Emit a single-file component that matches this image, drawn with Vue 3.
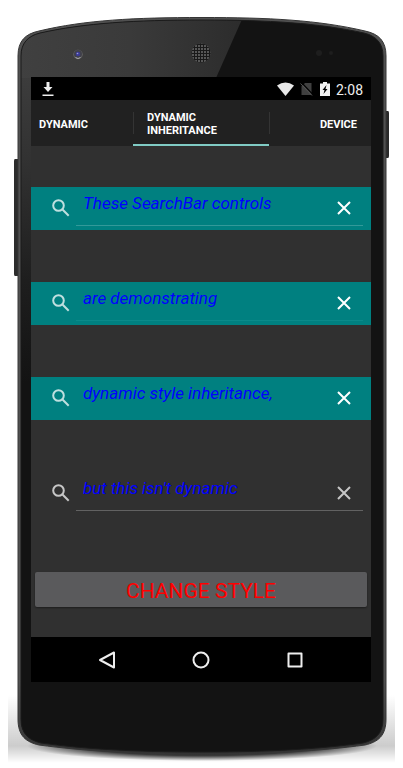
<script setup>
import { ref } from 'vue'

const tabs = ['Dynamic', 'Dynamic Inheritance', 'Device']
const active = ref(1)
const teal = ref(true)
const bars = ref([
  { text: 'These SearchBar controls', dynamic: true, line: 'bright' },
  { text: 'are demonstrating', dynamic: true, line: 'faint' },
  { text: 'dynamic style inheritance,', dynamic: true, line: 'none' },
  { text: "but this isn't dynamic", dynamic: false, line: 'bright' },
])
</script>

<template>
  <div class="phone">
    <svg class="body" viewBox="0 0 403 768" preserveAspectRatio="none" aria-hidden="true">
      <defs>
        <linearGradient id="face" x1="0" y1="0" x2="0" y2="1">
          <stop offset="0" stop-color="#3c3c3c" />
          <stop offset=".12" stop-color="#323232" />
          <stop offset=".3" stop-color="#1e1e1e" />
          <stop offset=".45" stop-color="#131313" />
          <stop offset="1" stop-color="#131313" />
        </linearGradient>
        <linearGradient id="gloss" x1="0" y1="0" x2="1" y2="0">
          <stop offset="0" stop-color="#404040" />
          <stop offset=".5" stop-color="#3a3a3a" />
          <stop offset="1" stop-color="#2c2c2c" />
        </linearGradient>
        <linearGradient id="rim" x1="0" y1="0" x2="0" y2="1">
          <stop offset="0" stop-color="#505050" />
          <stop offset=".9" stop-color="#505050" />
          <stop offset=".97" stop-color="#3c3c3c" />
          <stop offset="1" stop-color="#303030" />
        </linearGradient>
        <linearGradient id="fade" x1="0" y1="0" x2="0" y2="1">
          <stop offset="0" stop-color="#000" stop-opacity="0" />
          <stop offset=".75" stop-color="#000" stop-opacity=".2" />
          <stop offset="1" stop-color="#000" stop-opacity="0" />
        </linearGradient>
        <radialGradient id="under">
          <stop offset="0" stop-color="#000" />
          <stop offset=".65" stop-color="#000" stop-opacity=".75" />
          <stop offset="1" stop-color="#000" stop-opacity="0" />
        </radialGradient>
        <pattern id="mesh" width="3" height="3" patternUnits="userSpaceOnUse">
          <rect width="3" height="3" fill="#191919" />
          <circle cx="1" cy="1" r="1" fill="#6c6c6c" />
        </pattern>
        <clipPath id="shell">
          <path d="M21 56C21 43 28 36 40 33C85 23 135 20 202 20S318 23 364 33C376 36 383 43 383 56V719C383 734 375 740 363 743C320 749 270 752 202 752S84 749 41 743C29 740 21 734 21 719Z" />
        </clipPath>
      </defs>
      <rect x="8" y="695" width="387" height="68" fill="url(#fade)" />
      <ellipse cx="202" cy="746" rx="175" ry="15" fill="url(#under)" />
      <path d="M18 159H15Q14 159 14 161V274Q14 276 15 276H18Z" fill="#2c2c2c" />
      <path d="M385 111H388Q389 111 389 113V156Q389 158 388 158H385Z" fill="#292929" />
      <path d="M18 56C18 41 25 34 39 31C85 20 135 17.500 202 17.500S318 20 365 31C379 34 386 41 386 56V719C386 736 378 742 365 745C320 751 270 754 202 754S84 751 39 745C26 742 18 736 18 719Z" fill="url(#rim)" stroke="#363636" />
      <g clip-path="url(#shell)">
        <rect x="17" y="17" width="370" height="740" fill="#131313" />
        <rect x="17" y="77" width="15" height="680" fill="url(#face)" />
        <path d="M17 17H243L216 78H17Z" fill="url(#gloss)" />
      </g>
      <path d="M21 56C21 43 28 36 40 33C85 23 135 20 202 20S318 23 364 33C376 36 383 43 383 56V719C383 734 375 740 363 743C320 749 270 752 202 752S84 749 41 743C29 740 21 734 21 719Z" fill="none" stroke="#1b1b1b" />
      <circle cx="78" cy="54.500" r="4.700" fill="#666" />
      <circle cx="78" cy="54" r="4" fill="#40404a" />
      <circle cx="78" cy="54" r="2.200" fill="#3b3b99" />
      <circle cx="77.500" cy="53.500" r=".8" fill="#9a9ad0" />
      <path d="M75.500 57.500Q78 59.500 80.500 57.500" fill="none" stroke="#aaa" />
      <circle cx="201" cy="53" r="9.500" fill="url(#mesh)" />
      <circle cx="319" cy="53" r="3" fill="#1e1e1e" />
      <circle cx="331" cy="53" r="2" fill="#1e1e1e" />
    </svg>

    <div class="screen">
      <header class="status">
        <svg class="download" viewBox="0 0 12 16" aria-hidden="true">
          <path d="M4.500 1h3v5H10.500L6 11 1.500 6h3zM.5 13.500H11.500V15H.5z" fill="#eee" />
        </svg>
        <svg class="wifi" viewBox="0 0 17 14" aria-hidden="true">
          <path d="M0 3.500Q8.500-2.500 17 3.500L8.500 14z" fill="#e8e8e8" />
        </svg>
        <svg class="sim" viewBox="0 0 13 14" aria-hidden="true">
          <path d="M5 1H11.500V13H1.500V4.500z" fill="#404040" />
          <path d="M1.500.5 13 12.500" stroke="#000" stroke-width="1.200" />
          <path d="M.5 1.500 12 13.500" stroke="#555" stroke-width="1" />
        </svg>
        <svg class="battery" viewBox="0 0 10 14" aria-hidden="true">
          <path d="M3 0h4v1.500h3V14H0V1.500h3z" fill="#f2f2f2" />
          <path d="M6.500 3 2.500 8H4.500L3.500 12 7.500 7H5.500z" fill="#000" />
        </svg>
        <span class="clock">2:08</span>
      </header>

      <nav class="tabs">
        <button
          v-for="(tab, i) in tabs"
          :key="tab"
          type="button"
          class="tab"
          :class="{ active: active === i }"
          @click="active = i"
        >
          <span>{{ tab }}</span>
        </button>
      </nav>

      <main class="content">
        <div class="bars">
          <form
            v-for="(bar, i) in bars"
            :key="i"
            class="bar"
            :class="{ teal: bar.dynamic && teal, dim: !bar.dynamic }"
            @submit.prevent
          >
            <label :for="'search-' + i" class="lens" aria-label="Search">
              <svg viewBox="0 0 18 18" aria-hidden="true">
                <circle cx="6.500" cy="6.500" r="5.300" />
                <path d="M10.500 10.500 16.700 16.700" />
              </svg>
            </label>
            <div class="field" :class="bar.line">
              <input :id="'search-' + i" v-model="bar.text" type="text" />
              <button type="button" class="clear" aria-label="Clear" @click="bar.text = ''">
                <svg viewBox="0 0 14 14" aria-hidden="true">
                  <path d="M1 1 13 13M13 1 1 13" />
                </svg>
              </button>
            </div>
          </form>
        </div>
        <button type="button" class="change" @click="teal = !teal">Change Style</button>
      </main>

      <footer class="keys">
        <button type="button" aria-label="Back">
          <svg viewBox="0 0 18 18"><path d="M16 1.500V16.500L2 9z" /></svg>
        </button>
        <button type="button" aria-label="Home">
          <svg viewBox="0 0 18 18"><circle cx="9" cy="9" r="7.500" /></svg>
        </button>
        <button type="button" aria-label="Overview">
          <svg viewBox="0 0 18 18"><path d="M2.500 2.500H15.500V15.500H2.500z" /></svg>
        </button>
      </footer>
    </div>
  </div>
</template>

<style>
body {
  margin: 0;
  background: #fff;
}
</style>

<style scoped>
* {
  box-sizing: border-box;
}

.phone {
  position: relative;
  padding: 77px 32px 86px 31px;
  font-family: Roboto, sans-serif;
}

.body {
  position: absolute;
  inset: 0;
  width: 100%;
  height: 100%;
}

.screen {
  position: relative;
  background: #303030;
}

button {
  padding: 0;
  border: 0;
  background: none;
  color: inherit;
  font-family: inherit;
}

svg {
  display: block;
}

.status {
  display: flex;
  align-items: center;
  height: 23px;
  padding: 0 8px 0 11px;
  background: #000;
  color: #eee;
}

.download {
  width: 12px;
  height: 16px;
  margin-right: auto;
}

.wifi {
  width: 17px;
  height: 14px;
  margin-right: 6px;
}

.sim {
  width: 13px;
  height: 14px;
  margin-right: 7px;
}

.battery {
  width: 10px;
  height: 14px;
  margin-right: 6px;
}

.clock {
  padding-top: 2px;
  font-size: 14px;
  line-height: 16px;
}

.tabs {
  display: grid;
  grid-template-columns: 3fr 4fr 3fr;
  height: 46px;
  background: #212121;
}

.tab {
  position: relative;
  display: flex;
  align-items: center;
  padding: 4px 14px 0;
  border-bottom: 2px solid transparent;
  color: #fff;
  font-size: 11px;
  font-weight: 700;
  line-height: 13px;
  text-align: left;
  text-transform: uppercase;
}

.tab:first-child {
  padding-left: 8px;
}

.tab:last-child {
  justify-content: flex-end;
}

.tab span {
  max-width: 80px;
}

.tab + .tab::before {
  content: '';
  position: absolute;
  top: 12px;
  left: 0;
  width: 1px;
  height: 22px;
  background: #343434;
}

.tab.active {
  border-bottom-color: #80cbc4;
}

.content {
  padding: 41px 0 30px;
}

.bars {
  display: grid;
  gap: 52px;
}

.bar {
  display: flex;
  height: 43px;
  padding: 0 8px 0 21px;
  color: #fff;
}

.bar.teal {
  background: #008080;
}

.bar.dim {
  color: #c6c6c6;
}

.lens {
  width: 24px;
  padding-top: 12px;
}

.lens svg {
  width: 18px;
  height: 18px;
  fill: none;
  stroke: currentColor;
  stroke-width: 2;
  opacity: 0.75;
}

.dim .lens svg {
  opacity: 1;
}

.field {
  display: flex;
  flex: 1;
  min-width: 0;
  height: 39px;
  border-bottom: 1px solid transparent;
}

.field.bright {
  border-color: #339999;
}

.field.faint {
  border-color: #0a8a8a;
}

.dim .field.bright {
  border-color: #626262;
}

input {
  flex: 1;
  min-width: 0;
  height: 32px;
  padding: 0 0 0 7px;
  border: 0;
  outline: 0;
  background: none;
  color: #00f;
  font: italic 17px/20px Roboto, sans-serif;
}

.clear {
  display: grid;
  place-items: center;
  width: 38px;
  padding-top: 4px;
}

.clear svg {
  width: 14px;
  height: 14px;
  fill: none;
  stroke: currentColor;
  stroke-width: 2;
}

.change {
  display: block;
  width: calc(100% - 8px);
  height: 35px;
  margin: 57px 4px 0;
  padding-top: 3px;
  border-radius: 2px;
  background: #5a5a5c;
  box-shadow: 0 1px 2px rgba(0, 0, 0, 0.4);
  color: #f00;
  font-size: 21px;
  line-height: 32px;
  text-transform: uppercase;
}

.keys {
  display: flex;
  align-items: center;
  justify-content: center;
  gap: 76px;
  height: 45px;
  background: #000;
}

.keys svg {
  width: 18px;
  height: 18px;
  fill: none;
  stroke: #eee;
  stroke-width: 2;
  stroke-linejoin: round;
}
</style>
